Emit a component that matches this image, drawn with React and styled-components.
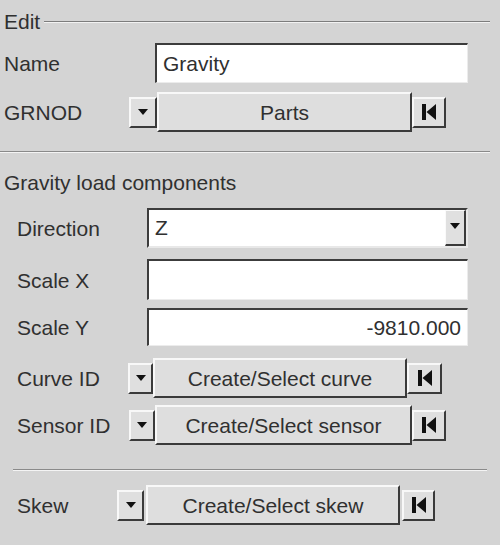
import React from "react";
import styled, { createGlobalStyle } from "styled-components";

const GlobalStyle = createGlobalStyle`
  html, body {
    margin: 0;
    padding: 0;
    background: #d4d4d4;
  }
  body {
    font-family: "Liberation Sans", Arial, sans-serif;
    color: #303030;
  }
`;

function App() {
  return (
    <Panel>
      <GlobalStyle />
      <GroupTitle $top={12}>
        <span>Edit</span>
        <Etch />
      </GroupTitle>

      <Row $top={11} $pad={4}>
        <Label $w={151}>Name</Label>
        <TextBox $w={313}>Gravity</TextBox>
      </Row>

      <Row $top={9} $pad={4}>
        <Label $w={125}>GRNOD</Label>
        <EntityPicker smallW={28} mainW={255} endW={34} text="Parts" />
      </Row>

      <Separator $top={19} $left={0} $right={10} />

      <SectionTitle $top={20}>Gravity load components</SectionTitle>

      <Row $top={15} $pad={17}>
        <Label $w={130}>Direction</Label>
        <Combo $w={321}>
          <ComboText>Z</ComboText>
          <ComboButton>
            <DownArrow />
          </ComboButton>
        </Combo>
      </Row>

      <Row $top={11} $pad={17} $h={41}>
        <Label $w={130}>Scale X</Label>
        <TextBox $w={321} />
      </Row>

      <Row $top={8} $pad={17} $h={38}>
        <Label $w={130}>Scale Y</Label>
        <TextBox $w={321} $right>-9810.000</TextBox>
      </Row>

      <Row $top={12} $pad={17}>
        <Label $w={111}>Curve ID</Label>
        <EntityPicker smallW={25} mainW={254} endW={35} text="Create/Select curve" />
      </Row>

      <Row $top={7} $pad={17}>
        <Label $w={112}>Sensor ID</Label>
        <EntityPicker smallW={26} mainW={257} endW={34} text="Create/Select sensor" />
      </Row>

      <Separator $top={24} $left={13} $right={13} />

      <Row $top={14} $pad={17}>
        <Label $w={100}>Skew</Label>
        <EntityPicker smallW={27} mainW={254} endW={33} text="Create/Select skew" gap={2} />
      </Row>
    </Panel>
  );
}

function EntityPicker({ smallW, mainW, endW, text, gap = 0 }) {
  return (
    <Picker $gap={gap}>
      <SmallButton $w={smallW}>
        <DownArrow />
      </SmallButton>
      <MainButton $w={mainW}>{text}</MainButton>
      <SmallButton $w={endW}>
        <FirstIcon />
      </SmallButton>
    </Picker>
  );
}

function DownArrow() {
  return (
    <svg width="10" height="6" viewBox="0 0 10 6">
      <path d="M0 0 H10 L5 6 Z" fill="#111" />
    </svg>
  );
}

function FirstIcon() {
  return (
    <svg width="14" height="16" viewBox="0 0 14 16">
      <rect x="0" y="0" width="4" height="16" fill="#111" />
      <path d="M14 0 V16 L4.5 8 Z" fill="#111" />
    </svg>
  );
}

export default App;

const Panel = styled.div`
  width: 500px;
  height: 545px;
  display: flex;
  flex-direction: column;
  font-size: 21px;
  overflow: hidden;
`;

const GroupTitle = styled.div`
  display: flex;
  align-items: center;
  gap: 4px;
  height: 20px;
  margin-top: ${(p) => p.$top}px;
  padding: 0 10px 0 4px;
`;

const Etch = styled.div`
  flex: 1;
  height: 0;
  border-top: 1px solid #7d7d7d;
  border-bottom: 1px solid #f2f2f2;
`;

const Separator = styled.div`
  height: 0;
  margin: ${(p) => p.$top}px ${(p) => p.$right}px 0 ${(p) => p.$left}px;
  border-top: 1px solid #8a8a8a;
  border-bottom: 1px solid #f4f4f4;
`;

const SectionTitle = styled.div`
  height: 20px;
  line-height: 20px;
  margin-top: ${(p) => p.$top}px;
  padding-left: 4px;
`;

const Row = styled.div`
  display: flex;
  align-items: center;
  height: ${(p) => p.$h || 40}px;
  margin-top: ${(p) => p.$top}px;
  padding-left: ${(p) => p.$pad}px;
`;

const Label = styled.div`
  width: ${(p) => p.$w}px;
  flex-shrink: 0;
  padding-top: 2px;
  white-space: nowrap;
`;

const TextBox = styled.div`
  box-sizing: border-box;
  width: ${(p) => p.$w}px;
  height: 100%;
  display: flex;
  align-items: center;
  justify-content: ${(p) => (p.$right ? "flex-end" : "flex-start")};
  padding: 0 6px;
  background: #fff;
  border-top: 2px solid #3c3c3c;
  border-left: 2px solid #3c3c3c;
  border-right: 1px solid #ececec;
  border-bottom: 1px solid #ececec;
`;

const Combo = styled.div`
  box-sizing: border-box;
  width: ${(p) => p.$w}px;
  height: 100%;
  display: flex;
  background: #fff;
  border-top: 2px solid #3c3c3c;
  border-left: 2px solid #3c3c3c;
  border-right: 2px solid #e8e8e8;
  border-bottom: 2px solid #e8e8e8;
`;

const ComboText = styled.div`
  flex: 1;
  display: flex;
  align-items: center;
  padding-left: 6px;
`;

const ComboButton = styled.div`
  box-sizing: border-box;
  width: 21px;
  display: flex;
  align-items: center;
  justify-content: center;
  padding-bottom: 4px;
  background: #e0e0e0;
  border-top: 1px solid #fafafa;
  border-left: 1px solid #fafafa;
  border-right: 2px solid #3a3a3a;
  border-bottom: 2px solid #3a3a3a;
`;

const Picker = styled.div`
  display: flex;
  align-items: center;
  gap: ${(p) => p.$gap}px;
  height: 100%;
`;

const SmallButton = styled.div`
  box-sizing: border-box;
  width: ${(p) => p.$w}px;
  height: 31px;
  display: flex;
  align-items: center;
  justify-content: center;
  background: #dfdfdf;
  border-top: 2px solid #f8f8f8;
  border-left: 2px solid #f8f8f8;
  border-right: 2px solid #3a3a3a;
  border-bottom: 2px solid #3a3a3a;
`;

const MainButton = styled.div`
  box-sizing: border-box;
  width: ${(p) => p.$w}px;
  height: 40px;
  display: flex;
  align-items: center;
  justify-content: center;
  padding-top: 2px;
  background: #dedede;
  white-space: nowrap;
  border-top: 2px solid #f8f8f8;
  border-left: 2px solid #f8f8f8;
  border-right: 2px solid #3a3a3a;
  border-bottom: 2px solid #3a3a3a;
`;
